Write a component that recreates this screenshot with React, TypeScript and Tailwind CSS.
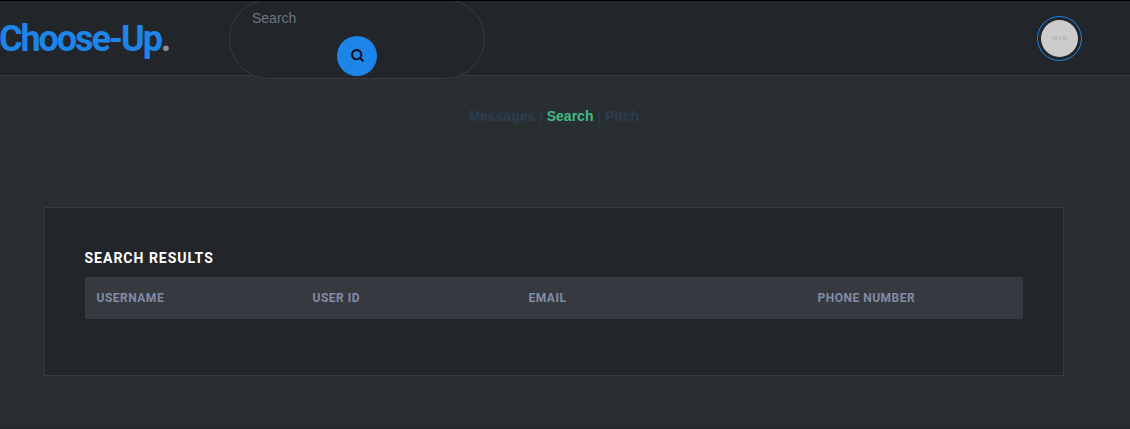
import { BiSearch } from "react-icons/bi";

const columns = [
  { label: "Username", width: "w-[216px]" },
  { label: "User ID", width: "w-[216px]" },
  { label: "Email", width: "w-[289px]" },
  { label: "Phone Number", width: "w-[217px]" },
];

function Header() {
  return (
    <header className="flex h-[76px] items-start border-t border-b border-t-black border-b-[#373a3f] bg-[#22252a]">
      <div className="-ml-px w-[230px] shrink-0 pt-3.5 font-[Roboto,sans-serif] text-[36px] leading-[48px] font-bold tracking-[-2.07px] whitespace-nowrap text-[#1d85e8]">
        Choose-Up<span className="text-[#8e8ea1]">.</span>
      </div>
      <div className="h-[78px] w-64 shrink-0 overflow-hidden">
        <form className="-mt-0.5 flex h-20 w-64 flex-col items-center rounded-[40px] border border-[#373a3f] bg-[#22252a] pt-[5px]">
          <input
            placeholder="Search"
            className="h-[26px] w-full bg-transparent px-[22px] font-['Liberation_Sans',sans-serif] text-[14px] text-white outline-none placeholder:text-[#6c7680]"
          />
          <button
            type="button"
            aria-label="Search"
            className="mt-[5px] flex size-10 shrink-0 items-center justify-center rounded-full bg-[#1d85e8] pl-px text-black"
          >
            <BiSearch size={16} className="stroke-black stroke-[0.6]" />
          </button>
        </form>
      </div>
      <div className="mt-[15px] mr-12 ml-auto flex size-[45px] items-center justify-center rounded-full border border-[#1d85e8]">
        <div className="flex size-[37px] items-center justify-center rounded-full bg-[#cccccc] pt-0.5 font-['Liberation_Sans',sans-serif] text-[4.5px] leading-none font-bold text-[#b0b0b0]">
          50 x 50
        </div>
      </div>
    </header>
  );
}

export default function App() {
  return (
    <div className="flex h-[429px] w-[1130px] flex-col overflow-hidden border-b-2 border-[#25272d] bg-[#292e31]">
      <Header />
      <nav className="mt-[30px] mr-[22.5px] text-center font-['Liberation_Sans',sans-serif] text-[14px] leading-5 font-bold text-[#2c3e50]">
        <a>Messages</a> <span className="font-normal">|</span> <a className="text-[#42b983]">Search</a>{" "}
        <span className="font-normal">|</span> <a>Pitch</a>
      </nav>
      <section className="mt-[81px] ml-11 h-[169px] w-[1020px] border border-[#373a3f] bg-[#22252a] px-10 pt-10 font-[Roboto,sans-serif]">
        <h2 className="-ml-[0.5px] h-[29px] text-[14px] leading-5 font-bold tracking-[1px] text-white uppercase">
          Search Results
        </h2>
        <div className="flex h-[42px] items-center bg-[#363940] text-[12px] font-bold tracking-[0.5px] text-[#838ba6] uppercase">
          {columns.map((column) => (
            <div key={column.label} className={`shrink-0 pr-3 pl-[11.5px] ${column.width}`}>
              {column.label}
            </div>
          ))}
        </div>
      </section>
    </div>
  );
}
